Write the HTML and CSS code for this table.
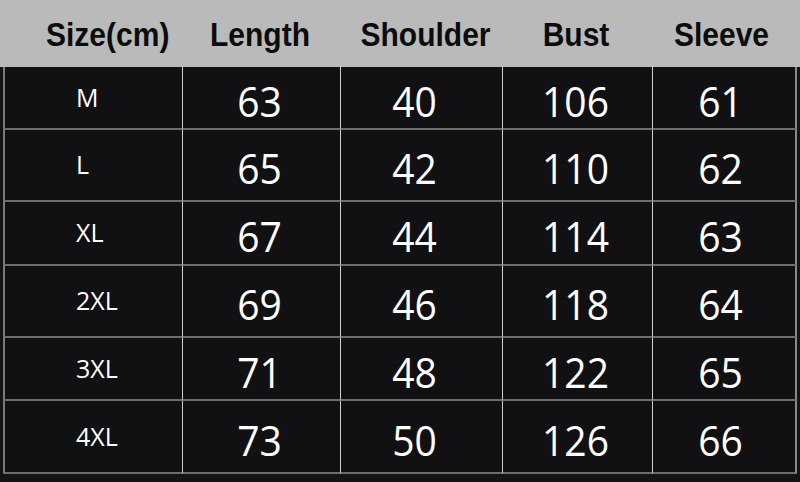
FILE: index.html
```html
<!DOCTYPE html>
<html>
<head>
<meta charset="utf-8">
<link rel="stylesheet" href="styles.css">
</head>
<body>
<div class="chart">
  <div class="head">
    <div class="hcell first">Size(cm)</div>
    <div class="hcell">Length</div>
    <div class="hcell c3">Shoulder</div>
    <div class="hcell">Bust</div>
    <div class="hcell c5">Sleeve</div>
  </div>
  <div class="grid">
    <div class="cell label r1">M</div><div class="cell num r1"><span>63</span></div><div class="cell num c3 r1"><span>40</span></div><div class="cell num r1"><span>106</span></div><div class="cell num c5 r1"><span>61</span></div>
    <div class="cell label r2">L</div><div class="cell num r2"><span>65</span></div><div class="cell num c3 r2"><span>42</span></div><div class="cell num r2"><span>110</span></div><div class="cell num c5 r2"><span>62</span></div>
    <div class="cell label r3">XL</div><div class="cell num r3"><span>67</span></div><div class="cell num c3 r3"><span>44</span></div><div class="cell num r3"><span>114</span></div><div class="cell num c5 r3"><span>63</span></div>
    <div class="cell label r4">2XL</div><div class="cell num r4"><span>69</span></div><div class="cell num c3 r4"><span>46</span></div><div class="cell num r4"><span>118</span></div><div class="cell num c5 r4"><span>64</span></div>
    <div class="cell label r5">3XL</div><div class="cell num r5"><span>71</span></div><div class="cell num c3 r5"><span>48</span></div><div class="cell num r5"><span>122</span></div><div class="cell num c5 r5"><span>65</span></div>
    <div class="cell label r6">4XL</div><div class="cell num r6"><span>73</span></div><div class="cell num c3 r6"><span>50</span></div><div class="cell num r6"><span>126</span></div><div class="cell num c5 r6"><span>66</span></div>
  </div>
</div>
</body>
</html>
```

FILE: styles.css
```css
html, body {
  margin: 0;
  padding: 0;
  background: #141416;
}
.chart {
  width: 800px;
  height: 482px;
  overflow: hidden;
}
.head {
  height: 67px;
  background: #bababa;
  display: grid;
  grid-template-columns: 183px 158px 162px 150px 147px;
  align-items: center;
}
.hcell {
  font-family: "Liberation Sans", Arial, sans-serif;
  font-weight: bold;
  font-size: 30px;
  color: #0c0c0c;
  text-align: center;
  transform: scaleY(1.08);
  padding-top: 2px;
  padding-right: 4px;
}
.hcell.c3 {
  padding-right: 0;
  padding-left: 7px;
}
.hcell.c5 {
  padding-right: 10px;
}
.hcell.first {
  text-align: left;
  padding-left: 46px;
  padding-right: 0;
}
.grid {
  margin-left: 3px;
  width: 794px;
  display: grid;
  grid-template-columns: 180px 158px 162px 150px 144px;
  grid-template-rows: 63px 72px 64px 72px 63px 73px;
  background: #111113;
}
.cell {
  box-sizing: border-box;
  border-bottom: 2px solid #6c6c6c;
  border-right: 1px solid #cfcfcf;
  display: flex;
  align-items: center;
  color: #ffffff;
  font-family: "Open Sans", "Noto Sans", sans-serif;
}
.cell.label {
  border-left: 2px solid #7a7a7a;
  padding-left: 71px;
  font-size: 25px;
  padding-bottom: 2px;
}
.cell:nth-child(5n) {
  border-right: 2px solid #8a8a8a;
}
.cell.num {
  justify-content: center;
  font-size: 39px;
  padding-right: 4px;
}
.cell.num.c3 {
  padding-right: 14px;
}
.cell.num.c5 {
  padding-right: 7px;
}
.cell.num span {
  display: inline-block;
  transform: scaleY(1.1);
  padding-top: 3px;
}
```
